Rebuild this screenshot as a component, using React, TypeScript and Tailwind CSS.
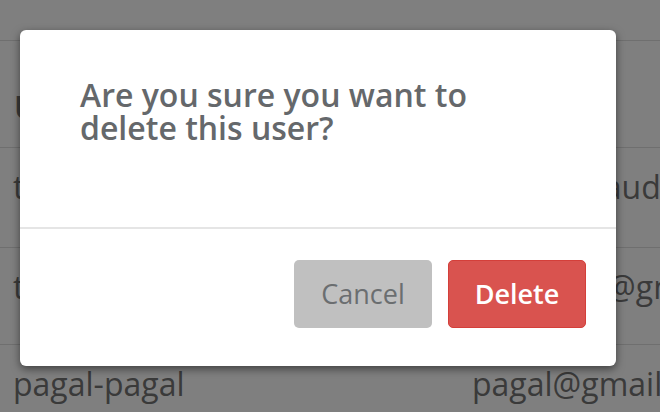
import React from "react";

const rows = [
  { name: "tushar-chaudhary", email: "tusharchaudhary@gmail.com", h: "h-[100px]" },
  { name: "tushar-k", email: "tushar.kr@gmail.com", h: "h-[97px]" },
  { name: "pagal-pagal", email: "pagal@gmail.com", h: "h-[98px]" },
];

function UsersTable() {
  return (
    <div className="w-full bg-white text-[#747474] text-[32px]">
      <div className="h-[40px]" />
      <div className="flex h-[108px] items-end pb-[18px] border-t border-[#dedede] border-b border-b-[#dedede] font-bold whitespace-nowrap">
        <div className="w-[458px] shrink-0 overflow-hidden pl-[14px] leading-[45px]">Username</div>
        <div className="flex-1 min-w-0 pl-[14px] leading-[45px]">Email</div>
      </div>
      {rows.map((row) => {
        return (
          <div
            key={row.name}
            className={`flex ${row.h} pt-[16px] border-b border-[#dedede] whitespace-nowrap`}
          >
            <div className="w-[458px] shrink-0 overflow-hidden pl-[13px] leading-[45px]">{row.name}</div>
            <div className="flex-1 min-w-0 pl-[14px] leading-[45px]">{row.email}</div>
          </div>
        );
      })}
    </div>
  );
}

export default function App() {
  return (
    <div
      className="relative w-[660px] h-[412px] overflow-hidden"
      style={{ fontFamily: "'Open Sans', 'Noto Sans', sans-serif" }}
    >
      <UsersTable />

      {/* modal backdrop */}
      <div className="absolute inset-0 bg-black/50 pt-[30px] px-[20px]">
        <div className="w-[596px] bg-white rounded-[6px] shadow-[0_3px_9px_rgba(0,0,0,0.5)]">
          <div className="h-[199px] px-[60px] pt-[48px] border-b-2 border-[#e5e5e5]">
            <h2 className="text-[32px] leading-[33px] font-semibold text-[#65686b]">
              Are you sure you want to
              <br />
              delete this user?
            </h2>
          </div>
          <div className="flex justify-end gap-[16px] pt-[31px] pb-[38px] pr-[30px]">
            <button className="w-[138px] h-[68px] rounded-[5px] bg-[#c0c0c0] text-[27px] text-[#6b6e70]">
              Cancel
            </button>
            <button className="w-[138px] h-[68px] rounded-[5px] bg-[#d9534f] border border-[#d43f3a] text-[27px] font-semibold text-white">
              Delete
            </button>
          </div>
        </div>
      </div>
    </div>
  );
}
